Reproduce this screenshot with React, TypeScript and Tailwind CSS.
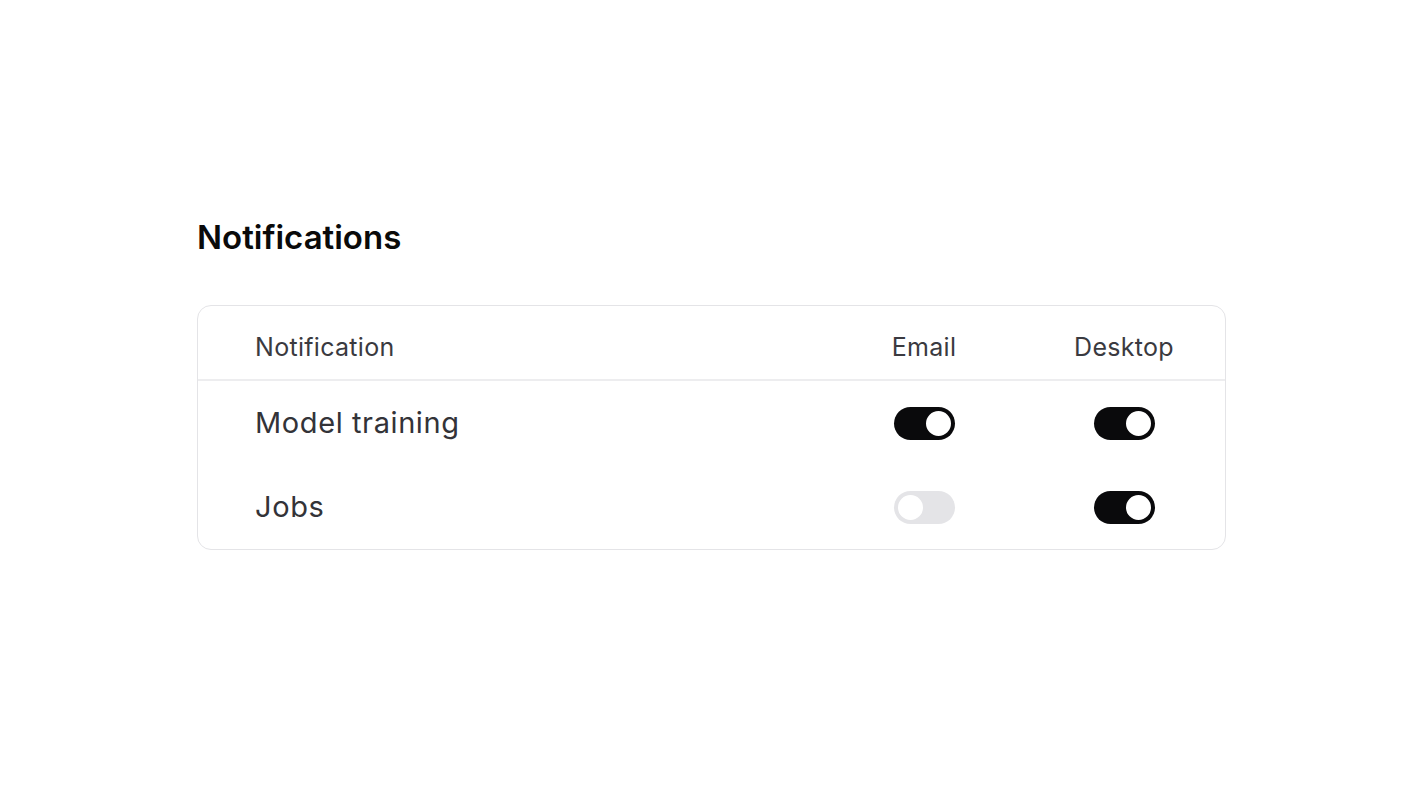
import React, { useState } from 'react';

type Row = { label: string; email: boolean; desktop: boolean };

const initialRows: Row[] = [
    { label: 'Model training', email: true, desktop: true },
    { label: 'Jobs', email: false, desktop: true },
];

function Toggle({ on, onChange }: { on: boolean; onChange: () => void }) {
    return (
        <button
            type="button"
            role="switch"
            aria-checked={on}
            onClick={onChange}
            className={`relative flex items-center w-[61px] h-[33px] rounded-full p-[2px] transition-colors ${
                on ? 'bg-[#0a0a0c] justify-end' : 'bg-[#e4e4e7] justify-start'
            }`}
        >
            <span
                className={`block w-[29px] h-[29px] rounded-full bg-white border-2 ${
                    on ? 'border-[#0a0a0c]' : 'border-[#e4e4e7]'
                }`}
            />
        </button>
    );
}

export default function App() {
    const [rows, setRows] = useState(initialRows);

    const flip = (i: number, key: 'email' | 'desktop') =>
        setRows((r) => r.map((row, j) => (j === i ? { ...row, [key]: !row[key] } : row)));

    return (
        <div className="min-h-screen bg-white font-['Inter',sans-serif] pt-[213px] pl-[197px]">
            <h1 className="text-[33px] font-semibold text-[#0a0a0a] leading-[48px]">Notifications</h1>

            <div className="mt-[44px] w-[1029px] border border-[#e4e4e7] rounded-[14px]">
                {/* header */}
                <div className="grid grid-cols-[1fr_200px_200px] items-center h-[75px] pl-[57px] pr-[1px] border-b-2 border-[#ededef] text-[25px] tracking-[0.3px] text-[#3a3a40] pt-[11px]">
                    <span>Notification</span>
                    <span className="text-center">Email</span>
                    <span className="text-center">Desktop</span>
                </div>

                {rows.map((row, i) => (
                    <div key={row.label} className="grid grid-cols-[1fr_200px_200px] items-center h-[84px] pl-[57px] pr-[1px]">
                        <span className="text-[29px] text-[#333338] tracking-[0.6px]">{row.label}</span>
                        <div className="flex justify-center">
                            <Toggle on={row.email} onChange={() => flip(i, 'email')} />
                        </div>
                        <div className="flex justify-center">
                            <Toggle on={row.desktop} onChange={() => flip(i, 'desktop')} />
                        </div>
                    </div>
                ))}
            </div>
        </div>
    );
}
